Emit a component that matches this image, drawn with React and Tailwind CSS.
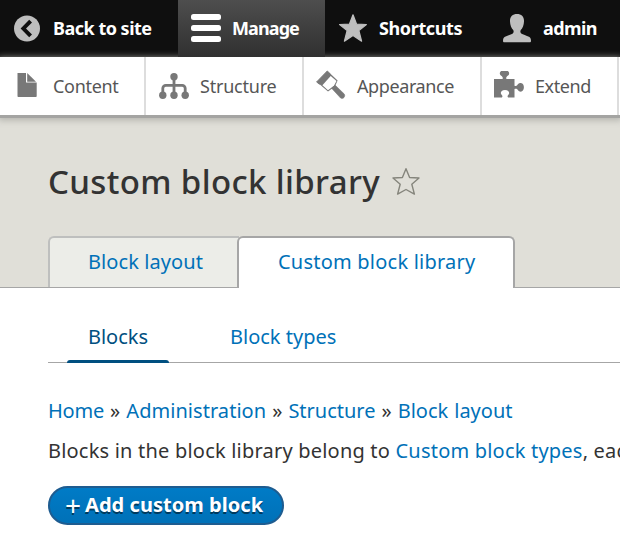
const toolbarFont = "font-['Noto_Sans',sans-serif]";

function BackIcon() {
  return (
    <svg className="h-[30px] w-[30px]" viewBox="0 0 30 30">
      <circle cx="15" cy="14.500" r="13" fill="#bebebe" />
      <path d="M17.2 5.800 20 8.500l-6 6 6 6-2.800 2.700L8.600 14.500z" fill="#0f0f0f" />
    </svg>
  );
}

function MenuIcon() {
  return (
    <svg className="h-[30px] w-[30px]" viewBox="0 0 30 30" fill="#fff">
      <rect y="0" width="30" height="6" rx="2.5" />
      <rect y="11" width="30" height="6" rx="2.5" />
      <rect y="22" width="30" height="6" rx="2.5" />
    </svg>
  );
}

function StarIcon() {
  return (
    <svg className="h-[30px] w-[30px]" viewBox="0 0 30 30">
      <path
        d="M15 .8 18.600 10.200 28.400 10.500 20.900 16.600 23.600 27.200 15 21.600 6.400 27.200 9.100 16.600 1.600 10.500 11.400 10.200z"
        fill="#bebebe"
        stroke="#bebebe"
        strokeWidth="1.2"
        strokeLinejoin="round"
      />
    </svg>
  );
}

function UserIcon() {
  return (
    <svg className="h-[30px] w-[30px]" viewBox="0 0 30 30" fill="#bebebe">
      <path d="M15 0c4.500 0 7.200 2.700 7 7.400-.1 3.700-1.400 6.600-3.200 8.600-.6.8-.7 2.600.4 3.400 1.600 1.100 5.400 2 7.800 3.300 1.600.9 2 2.600 2 4.300 0 .7-.5 1.300-1.400 1.300H2.400C1.500 28.300 1 27.700 1 27c0-1.700.4-3.400 2-4.300 2.400-1.300 6.200-2.200 7.800-3.300 1.100-.8 1-2.600.4-3.400-1.800-2-3.100-4.900-3.200-8.600C7.800 2.700 10.500 0 15 0z" />
    </svg>
  );
}

function ContentIcon() {
  return (
    <svg className="h-[30px] w-[30px]" viewBox="0 0 30 30" fill="#787878">
      <path d="M5.500 2H14v9.600h10.700v13.600c0 .5-.3.800-.8.800H6.300c-.5 0-.8-.3-.8-.8z" />
      <path d="M15.200 2 24 10.800h-8.800z" />
    </svg>
  );
}

function StructureIcon() {
  return (
    <svg className="h-[30px] w-[30px]" viewBox="0 0 30 30" fill="#787878">
      <circle cx="15" cy="5.700" r="3.700" />
      <circle cx="3.800" cy="24.300" r="3.700" />
      <circle cx="15" cy="24.300" r="3.700" />
      <circle cx="26.200" cy="24.300" r="3.700" />
      <path
        d="M15 7v16M3.800 23v-5.700a3 3 0 0 1 3-3h16.400a3 3 0 0 1 3 3V23"
        fill="none"
        stroke="#787878"
        strokeWidth="2.800"
      />
    </svg>
  );
}

function AppearanceIcon() {
  return (
    <svg className="h-[30px] w-[30px] overflow-visible" viewBox="0 0 30 30" fill="#787878">
      <path d="M11.300 0 13.800 2.400 3.600 13.200.6 11z" stroke="#787878" strokeLinejoin="round" />
      <path d="M13.400 1.800 21.600 9.400 18.900 15.600 12 20.400 3 12.800z" />
      <path d="M14.700 5 20.500 10 17.900 14.800 12 19.200 6.400 14.200z" fill="#fff" />
      <path
        d="m15.600 17.200 3.600-3 8.800 8.600c2 2.200-.7 5.900-3.400 4.200z"
        stroke="#787878"
        strokeWidth=".6"
      />
    </svg>
  );
}

function ExtendIcon() {
  return (
    <svg className="h-[30px] w-[30px]" viewBox="0 0 30 30" fill="#787878">
      <path d="M0 8h8.600c.5-1.600-.2-2.600-1.800-3.500-1-.7-1.300-2.100-.7-3.200.3-.7.800-1.300 1.600-1.300h5.600c.8 0 1.300.6 1.600 1.300.5 1.100.2 2.500-.8 3.200-1.500.9-2.200 1.900-1.700 3.500H20.500v6.700c2 .7 2.700-.3 3.400-1.400.9-1.200 2.200-1.600 3.700-1.100 1.600.5 2.300 2.300 2.300 4.100s-.7 3.700-2.300 4.200c-1.500.4-2.800-.1-3.700-1.400-.8-1.100-1.500-1.700-3.400-1.100v8.500h-6.400c-1-1-.6-1.900.5-2.900 1.300-1.400.5-4.700-3.600-4.700-4.100 0-4.900 3.300-3.600 4.700 1.100 1 1.500 1.900.5 2.900H0z" />
    </svg>
  );
}

const trayItems = [
  { label: "Content", icon: ContentIcon, box: "w-[146px] pl-3", gap: "ml-[11px] tracking-[-0.300px]" },
  { label: "Structure", icon: StructureIcon, box: "w-[158px] pl-[13px]", gap: "ml-[11px] tracking-[-0.220px]" },
  { label: "Appearance", icon: AppearanceIcon, box: "w-[178px] pl-3", gap: "ml-[11px] tracking-[-0.400px]" },
  { label: "Extend", icon: ExtendIcon, box: "w-[137px] pl-3", gap: "ml-[11px] tracking-[-0.400px]" },
];

function Toolbar() {
  return (
    <nav className={`relative z-10 ${toolbarFont}`}>
      <div className="flex h-[57px] bg-[#0f0f0f] text-[18px] font-bold text-white">
        <a className="flex w-[178px] shrink-0 items-center pl-3">
          <BackIcon />
          <span className="ml-[11px] whitespace-nowrap tracking-[-0.500px]">Back to site</span>
        </a>
        <a className="flex w-[147px] shrink-0 items-center bg-linear-to-b from-[#4e4e4e] to-[#303030] pl-[13px]">
          <MenuIcon />
          <span className="ml-[11px] whitespace-nowrap tracking-[-0.900px]">Manage</span>
        </a>
        <a className="flex w-[163px] shrink-0 items-center pl-[13px]">
          <StarIcon />
          <span className="ml-[11px] whitespace-nowrap tracking-[-0.380px]">Shortcuts</span>
        </a>
        <a className="flex flex-1 items-center pl-[14px]">
          <UserIcon />
          <span className="ml-[11px] whitespace-nowrap tracking-[-0.600px]">admin</span>
        </a>
      </div>
      <div className="flex h-[58px] bg-white text-[18px] text-[#565656] shadow-[0_3px_0_#a4a4a2,0_3px_7px_2px_#b0b0ab]">
        {trayItems.map(({ label, icon: Icon, box, gap }) => (
          <a key={label} className={`flex shrink-0 items-center border-r-2 border-[#dddddd] ${box}`}>
            <Icon />
            <span className={`whitespace-nowrap ${gap}`}>{label}</span>
          </a>
        ))}
      </div>
    </nav>
  );
}

function PageHeader() {
  return (
    <header className="h-[173px] border-b border-[#a6a6a6] bg-[#e0dfd8] pl-12">
      <div className="flex h-[121px] items-center pt-[12px]">
        <h1 className="text-[33px] font-medium tracking-[0.360px] whitespace-nowrap text-[#333]">
          Custom block library
        </h1>
        <svg className="ml-3 h-[28px] w-[28px]" viewBox="0 0 28 28">
          <path
            d="M14 .7 17.600 9.500 27 10 19.800 16.200 22.400 26.100 14 21.500 5.600 26.100 8.200 16.200 1 10 10.400 9.500z"
            fill="none"
            stroke="#85857c"
            strokeWidth="1.400"
            strokeLinejoin="round"
          />
        </svg>
      </div>
      <div className="flex h-[52px] text-[20px] whitespace-nowrap text-[#0071b8]">
        <a className="flex h-[51px] w-[191px] items-center rounded-tl-md border-t-2 border-l-2 border-[#bebfbe] bg-[#ecede8] pb-0.5 pl-[38px] tracking-[0.080px]">
          Block layout
        </a>
        <a className="-ml-0.5 flex w-[278px] items-center rounded-t-md border-2 border-b-0 border-[#a6a6a6] bg-white pb-[3px] pl-[39px] tracking-[0.220px]">
          Custom block library
        </a>
      </div>
    </header>
  );
}

export default function App() {
  return (
    <div className="h-[546px] w-[620px] overflow-hidden bg-white font-['Noto_Sans',sans-serif] text-[20px] text-[#333]">
      <Toolbar />
      <PageHeader />
      <main className="pl-12">
        <nav className="flex h-[75px] border-b border-[#a6a6a6] pl-[19px] text-[#0071b8]">
          <a className="relative flex w-[102px] items-center justify-center pt-6 text-[#004f80]">
            Blocks
            <span className="absolute inset-x-0 -bottom-px h-[3px] rounded-t-sm bg-[#004f80]" />
          </a>
          <a className="ml-[61px] flex items-center pt-6">Block types</a>
        </nav>
        <p className="mt-[34px] leading-[28px] whitespace-nowrap [word-spacing:0.800px]">
          <a className="tracking-[-0.200px] text-[#0071b8]">Home</a> »{" "}
          <a className="tracking-[0.050px] text-[#0071b8]">Administration</a> »{" "}
          <a className="text-[#0071b8]">Structure</a> » <a className="text-[#0071b8]">Block layout</a>
        </p>
        <p className="mt-3 leading-[28px] tracking-[0.205px] whitespace-nowrap">
          Blocks in the block library belong to <a className="text-[#0071b8]">Custom block types</a>, each
        </p>
        <button className="mt-[21px] flex h-[39px] w-[236px] items-center rounded-full border-2 border-[#1e5c90] bg-linear-to-b from-[#007bc6] to-[#0071b8] pb-0.5 pl-[15px] font-bold tracking-[0.040px] whitespace-nowrap text-white [text-shadow:0_2px_0_rgba(0,0,0,0.5)]">
          <span className="mr-[4px] text-[28px] leading-none font-normal">+</span>
          Add custom block
        </button>
      </main>
    </div>
  );
}
